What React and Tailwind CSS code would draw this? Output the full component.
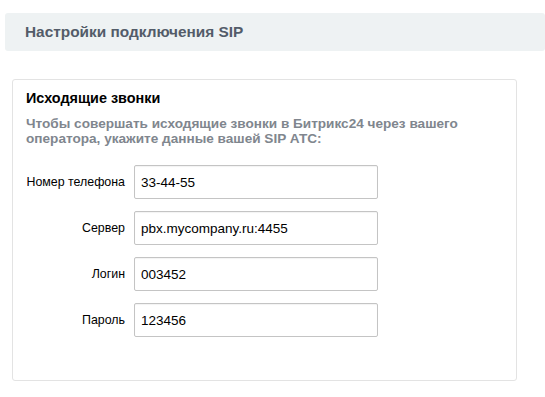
import React from 'react';

const fields = [
  { label: 'Номер телефона', value: '33-44-55' },
  { label: 'Сервер', value: 'pbx.mycompany.ru:4455' },
  { label: 'Логин', value: '003452' },
  { label: 'Пароль', value: '123456' },
];

const App = () => {
  return (
    <div className="w-[545px] h-[397px] bg-white overflow-hidden font-['Liberation_Sans'] antialiased">
      {/* Section header */}
      <div className="ml-[5px] mt-[13px] h-[38px] bg-[#eef2f3] rounded-[3px] pl-[20px] flex items-center">
        <h2 className="text-[15.4px] font-bold text-[#535c69]">Настройки подключения SIP</h2>
      </div>

      {/* Outgoing calls card */}
      <div className="ml-[12px] mt-[28px] w-[505px] h-[302px] border border-[#e3e3e3] rounded-[3px] pl-[13px] pt-[9px]">
        <h3 className="text-[14.4px] font-bold text-black leading-[18px]">Исходящие звонки</h3>
        <p className="mt-[9px] text-[13.6px] font-bold text-[#80868e] leading-[15px] w-[440px]">
          Чтобы совершать исходящие звонки в Битрикс24 через вашего оператора, укажите данные вашей SIP АТС:
        </p>

        <div className="mt-[19px] flex flex-col gap-[12px]">
          {fields.map((f) => (
            <div key={f.label} className="flex items-center">
              <label className="w-[99px] shrink-0 flex justify-end whitespace-nowrap text-[12.4px] text-black">
                {f.label}
              </label>
              <input
                type="text"
                defaultValue={f.value}
                className="ml-[9px] w-[244px] h-[34px] border border-[#c4c4c4] rounded-[2px] px-[6px] text-[13.5px] text-black outline-none shadow-[inset_0_1px_1px_rgba(0,0,0,0.05)]"
              />
            </div>
          ))}
        </div>
      </div>
    </div>
  );
};

export default App;
